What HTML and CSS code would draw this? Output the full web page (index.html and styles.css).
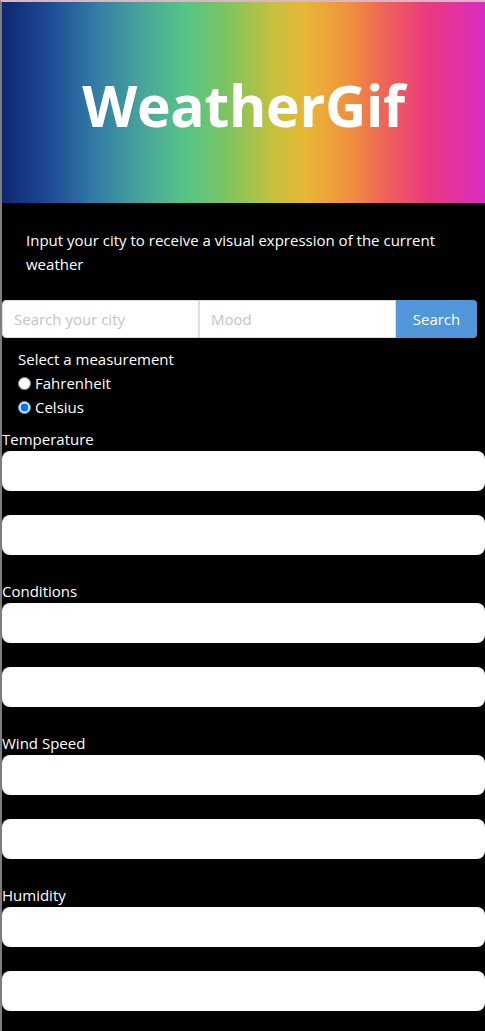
FILE: index.html
```html
<!DOCTYPE html>
<html lang="en">
<head>
<meta charset="utf-8">
<title>WeatherGif</title>
<link rel="stylesheet" href="styles.css">
</head>
<body>
<div class="page">
  <header class="hero">
    <h1 class="hero-title">WeatherGif</h1>
  </header>
  <p class="intro">Input your city to receive a visual expression of the current weather</p>
  <form class="search">
    <input class="search-input" type="text" placeholder="Search your city">
    <input class="search-input mood" type="text" placeholder="Mood">
    <button class="search-btn" type="button">Search</button>
  </form>
  <div class="units">
    <div class="units-title">Select a measurement</div>
    <label class="unit"><input type="radio" name="unit"> Fahrenheit</label>
    <label class="unit"><input type="radio" name="unit" checked> Celsius</label>
  </div>
  <section class="stat">
    <div class="stat-label">Temperature</div>
    <div class="stat-box"></div>
    <div class="stat-box"></div>
  </section>
  <section class="stat">
    <div class="stat-label">Conditions</div>
    <div class="stat-box"></div>
    <div class="stat-box"></div>
  </section>
  <section class="stat">
    <div class="stat-label">Wind Speed</div>
    <div class="stat-box"></div>
    <div class="stat-box"></div>
  </section>
  <section class="stat">
    <div class="stat-label">Humidity</div>
    <div class="stat-box"></div>
    <div class="stat-box"></div>
  </section>
</div>
</body>
</html>
```

FILE: styles.css
```css
html, body {
  margin: 0;
  padding: 0;
  background: #000;
}
body {
  font-family: "Open Sans", "Noto Sans", sans-serif;
  color: #fff;
  border-top: 2px solid #dcb6c6;
  border-left: 2px solid #7d7d7d;
  min-height: 1029px;
}
.page {
  display: flex;
  flex-direction: column;
}
.hero {
  height: 201px;
  display: flex;
  align-items: center;
  justify-content: center;
  background: linear-gradient(90deg,
    #0f2670 0%,
    #1e4c96 10%,
    #337fa6 20%,
    #4aa898 30%,
    #55c487 38%,
    #80c45f 47%,
    #c3c13e 56%,
    #e8b735 63%,
    #f0903d 72%,
    #ee5f5a 80%,
    #ec3a7e 88%,
    #d92cc2 100%);
}
.hero-title {
  margin: 6px 0 0 0;
  font-size: 57px;
  font-weight: 700;
  letter-spacing: -0.3px;
  color: #fff;
  line-height: 1;
}
.intro {
  margin: 25px 24px 24px 24px;
  font-size: 15px;
  line-height: 24px;
}
.search {
  display: flex;
  width: 475px;
  height: 38px;
  margin: 0;
}
.search-input {
  width: 197px;
  min-width: 0;
  flex: 0 0 197px;
  box-sizing: border-box;
  height: 38px;
  border: 1px solid #ddd;
  background: #fff;
  font-family: inherit;
  font-size: 15px;
  padding: 0 11px;
  margin: 0;
  outline: none;
  border-radius: 4px 0 0 4px;
}
.search-input.mood {
  border-left: 1px solid #e2e2e2;
  border-radius: 0;
}
.search-input::placeholder {
  color: #c4c4c4;
}
.search-btn {
  flex: 1;
  min-width: 0;
  height: 38px;
  border: none;
  margin: 0;
  padding: 0;
  background: #5096d9;
  color: #fff;
  font-family: inherit;
  font-size: 15px;
  border-radius: 0 4px 4px 0;
}
.units {
  padding: 9px 0 0 16px;
  font-size: 15px;
  line-height: 24px;
}
.unit {
  display: flex;
  align-items: center;
  gap: 4px;
}
.unit input {
  margin: 0;
  width: 13px;
  height: 13px;
}
.stat {
  display: flex;
  flex-direction: column;
  gap: 24px;
  margin-top: 8px;
}
.stat + .stat {
  margin-top: 24px;
}
.stat-label {
  font-size: 15px;
  line-height: 24px;
  margin-bottom: -24px;
}
.stat-box {
  height: 40px;
  background: #fff;
  border-radius: 8px;
}
```
